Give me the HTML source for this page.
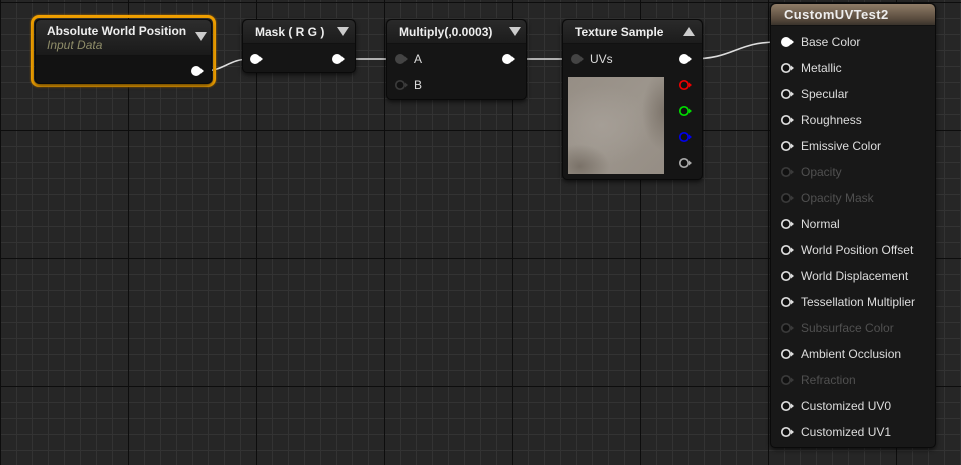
<!DOCTYPE html><html><head><style>
*{margin:0;padding:0;box-sizing:border-box}
body{width:961px;height:465px;overflow:hidden;background:#262626;position:relative;font-family:"Liberation Sans",sans-serif}
.grid{position:absolute;inset:0;background-image:
linear-gradient(to right,#0d0d0d 0 1px,transparent 1px),
linear-gradient(to bottom,#0d0d0d 0 1px,transparent 1px),
linear-gradient(to right,#333 0 1px,transparent 1px),
linear-gradient(to bottom,#333 0 1px,transparent 1px);
background-size:128px 128px,128px 128px,16px 16px,16px 16px;
background-position:0 2px,0 2px,0 2px,0 2px}
.node{position:absolute;background:#151515;border:1px solid #0a0a0a;border-radius:5px;box-shadow:0 2px 4px rgba(0,0,0,.6)}
.hd{position:absolute;left:0;right:0;top:0;height:24px;background:linear-gradient(#2a2a2a,#1c1c1c);border-bottom:1px solid #111;border-radius:5px 5px 0 0;color:#eee;font-weight:bold;font-size:12px;padding:5px 0 0 12px}
.tri{position:absolute;width:0;height:0;border-left:6px solid transparent;border-right:6px solid transparent}
.down{border-top:9px solid #ccc}
.up{border-bottom:9px solid #ccc}
.lbl{position:absolute;font-size:12px;color:#ddd;white-space:nowrap}
.dim{color:#505050}
</style></head><body>
<div class="grid"></div>
<svg width="961" height="465" style="position:absolute;left:0;top:0">
<path d="M203 71 C225 71,228 59,250 59" stroke="#ddd" stroke-width="1.6" fill="none"/>
<path d="M343 59 L394 59" stroke="#ddd" stroke-width="1.6" fill="none"/>
<path d="M516 59 L570 59" stroke="#ddd" stroke-width="1.6" fill="none"/>
<path d="M690 59 C735 59,735 42,778 42" stroke="#ddd" stroke-width="1.6" fill="none"/>
</svg>

<div style="position:absolute;left:31px;top:15px;width:185px;height:72px;border:3px solid #f0a000;border-radius:8px;box-shadow:0 0 2px #b07000"></div>
<div class="node" style="left:35px;top:19px;width:177px;height:65px;background:#121212">
<div class="hd" style="height:36px;padding-left:11px;padding-top:4px;background:linear-gradient(#2d2d2d,#1a1a1a)">Absolute World Position<div style="font-weight:normal;font-style:italic;color:#8e8c68;font-size:12px;margin-top:0px">Input Data</div></div>
<div class="tri down" style="left:159px;top:12px"></div>
</div>

<div class="node" style="left:242px;top:19px;width:114px;height:54px">
<div class="hd">Mask ( R G )</div>
<div class="tri down" style="left:94px;top:7px"></div>
</div>

<div class="node" style="left:386px;top:19px;width:141px;height:81px">
<div class="hd">Multiply(,0.0003)</div>
<div class="tri down" style="left:122px;top:7px"></div>
<div class="lbl" style="left:27px;top:32px">A</div>
<div class="lbl" style="left:27px;top:58px">B</div>
</div>

<div class="node" style="left:562px;top:19px;width:141px;height:161px">
<div class="hd">Texture Sample</div>
<div class="tri up" style="left:120px;top:7px"></div>
<div class="lbl" style="left:27px;top:32px">UVs</div>
<div style="position:absolute;left:5px;top:57px;width:96px;height:97px;background:
radial-gradient(ellipse 30px 22px at 12% 92%,rgba(80,70,60,.45),transparent),
radial-gradient(ellipse 22px 40px at 100% 35%,rgba(90,80,70,.45),transparent),
radial-gradient(ellipse 50px 40px at 35% 50%,#a59e96,transparent),
linear-gradient(135deg,#968e85,#9d968d 50%,#958d84)"></div>
</div>

<div class="node" style="left:770px;top:3px;width:166px;height:445px;background:#181818">
<div class="hd" style="height:22px;padding:3px 0 0 13px;font-size:13px;letter-spacing:0.4px;background:linear-gradient(#8f7c67,#5a4c3e 70%,#3a332b)">CustomUVTest2</div>
<div class="lbl" style="left:30px;top:31px">Base Color</div>
<div class="lbl" style="left:30px;top:57px">Metallic</div>
<div class="lbl" style="left:30px;top:83px">Specular</div>
<div class="lbl" style="left:30px;top:109px">Roughness</div>
<div class="lbl" style="left:30px;top:135px">Emissive Color</div>
<div class="lbl dim" style="left:30px;top:161px">Opacity</div>
<div class="lbl dim" style="left:30px;top:187px">Opacity Mask</div>
<div class="lbl" style="left:30px;top:213px">Normal</div>
<div class="lbl" style="left:30px;top:239px">World Position Offset</div>
<div class="lbl" style="left:30px;top:265px">World Displacement</div>
<div class="lbl" style="left:30px;top:291px">Tessellation Multiplier</div>
<div class="lbl dim" style="left:30px;top:317px">Subsurface Color</div>
<div class="lbl" style="left:30px;top:343px">Ambient Occlusion</div>
<div class="lbl dim" style="left:30px;top:369px">Refraction</div>
<div class="lbl" style="left:30px;top:395px">Customized UV0</div>
<div class="lbl" style="left:30px;top:421px">Customized UV1</div>
</div>

<svg width="961" height="465" style="position:absolute;left:0;top:0">
<defs>
<g id="pf"><circle cx="0" cy="0" r="5" fill="#fff"/><path d="M4.5 -3 L8 0 L4.5 3Z" fill="#fff"/></g>
<g id="po"><circle cx="0" cy="0" r="4.2" fill="#111" stroke="#ddd" stroke-width="1.7"/><path d="M5 -2.5 L8 0 L5 2.5Z" fill="#ddd"/></g>
<g id="pd"><circle cx="0" cy="0" r="4.2" fill="#111" stroke="#3a3a3a" stroke-width="1.7"/><path d="M5 -2.5 L8 0 L5 2.5Z" fill="#3a3a3a"/></g>
<g id="pg"><circle cx="0" cy="0" r="5" fill="#444"/><path d="M4.5 -3 L8 0 L4.5 3Z" fill="#444"/></g>
</defs>
<use href="#pf" x="196" y="71"/>
<use href="#pf" x="255" y="59"/>
<use href="#pf" x="337" y="59"/>
<use href="#pg" x="400" y="59"/>
<use href="#pd" x="400" y="85"/>
<use href="#pf" x="507" y="59"/>
<use href="#pg" x="576" y="59"/>
<use href="#pf" x="684" y="59"/>
<g><circle cx="684" cy="85" r="4.2" fill="#111" stroke="#e00" stroke-width="1.7"/><path d="M689 82.5 L692 85 L689 87.5Z" fill="#e00"/></g>
<g><circle cx="684" cy="111" r="4.2" fill="#111" stroke="#0d0" stroke-width="1.7"/><path d="M689 108.5 L692 111 L689 113.5Z" fill="#0d0"/></g>
<g><circle cx="684" cy="137" r="4.2" fill="#111" stroke="#00e" stroke-width="1.7"/><path d="M689 134.5 L692 137 L689 139.5Z" fill="#00e"/></g>
<g><circle cx="684" cy="163" r="4.2" fill="#111" stroke="#aaa" stroke-width="1.7"/><path d="M689 160.5 L692 163 L689 165.5Z" fill="#aaa"/></g>
<use href="#pf" x="786" y="42"/>
<use href="#po" x="786" y="68"/>
<use href="#po" x="786" y="94"/>
<use href="#po" x="786" y="120"/>
<use href="#po" x="786" y="146"/>
<use href="#pd" x="786" y="172"/>
<use href="#pd" x="786" y="198"/>
<use href="#po" x="786" y="224"/>
<use href="#po" x="786" y="250"/>
<use href="#po" x="786" y="276"/>
<use href="#po" x="786" y="302"/>
<use href="#pd" x="786" y="328"/>
<use href="#po" x="786" y="354"/>
<use href="#pd" x="786" y="380"/>
<use href="#po" x="786" y="406"/>
<use href="#po" x="786" y="432"/>
</svg>
</body></html>
